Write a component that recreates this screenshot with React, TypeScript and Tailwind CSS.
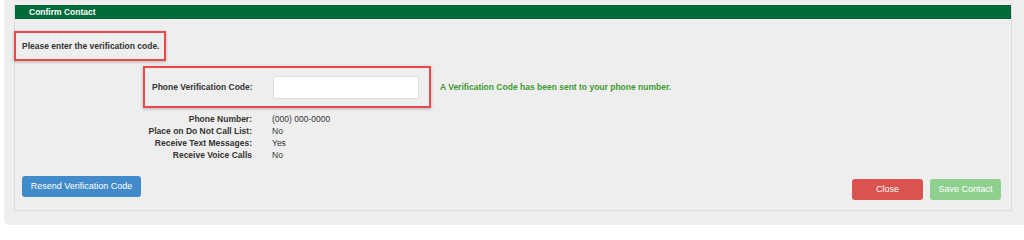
const details = [
  { label: "Phone Number:", value: "(000) 000-0000" },
  { label: "Place on Do Not Call List:", value: "No" },
  { label: "Receive Text Messages:", value: "Yes" },
  { label: "Receive Voice Calls", value: "No" },
];

export default function App() {
  return (
    <div className="h-[227px] w-[1024px] bg-white pl-[4px] font-['Liberation_Sans',Arial,sans-serif] text-[8.5px] text-[#333333]">
      <div className="h-[225px] rounded-bl-[6px] bg-[#eeeeee] pl-[10px] pr-[12px] pt-[5px]">
        <div className="h-[206px] border border-t-0 border-[#dcdcdc]">
          <div className="flex h-[14px] items-center bg-[#00693a] pl-[14px] font-bold leading-none text-white">
            Confirm Contact
          </div>

          <div className="-ml-px mt-[12px] flex h-[30px] w-[152px] items-center border-2 border-[#e8494b] pl-[6px] font-bold shadow-[0_1px_3px_rgba(0,0,0,0.25)]">
            Please enter the verification code.
          </div>

          <div className="mt-[5px] flex items-center">
            <div className="ml-[128px] flex h-[42px] w-[288px] items-center border-2 border-[#e8494b] pl-[7px] shadow-[0_1px_3px_rgba(0,0,0,0.25)]">
              <label className="w-[121px] font-bold">Phone Verification Code:</label>
              <input
                type="text"
                className="h-[23px] w-[146px] rounded-[2px] border border-[#dddddd] bg-white outline-none"
              />
            </div>
            <span className="ml-[9px] font-bold text-[#3d9a2f]">
              A Verification Code has been sent to your phone number.
            </span>
          </div>

          <div className="mt-[5px] flex flex-col">
            {details.map((row) => (
              <div key={row.label} className="flex h-[12px] items-center">
                <span className="w-[237px] text-right font-bold">{row.label}</span>
                <span className="ml-[20px]">{row.value}</span>
              </div>
            ))}
          </div>

          <div className="mt-[15px] flex items-start pl-[7px] pr-[10px]">
            <button className="h-[21px] w-[119px] rounded-[3px] bg-[#428bca] text-[9px] text-white">
              Resend Verification Code
            </button>
            <div className="ml-auto mt-[3px] flex gap-[7px]">
              <button className="h-[21px] w-[71px] rounded-[3px] bg-[#d9534f] text-[9px] text-white">
                Close
              </button>
              <button className="h-[21px] w-[71px] rounded-[3px] bg-[#90d08f] text-[9px] text-white">
                Save Contact
              </button>
            </div>
          </div>
        </div>
      </div>
    </div>
  );
}
